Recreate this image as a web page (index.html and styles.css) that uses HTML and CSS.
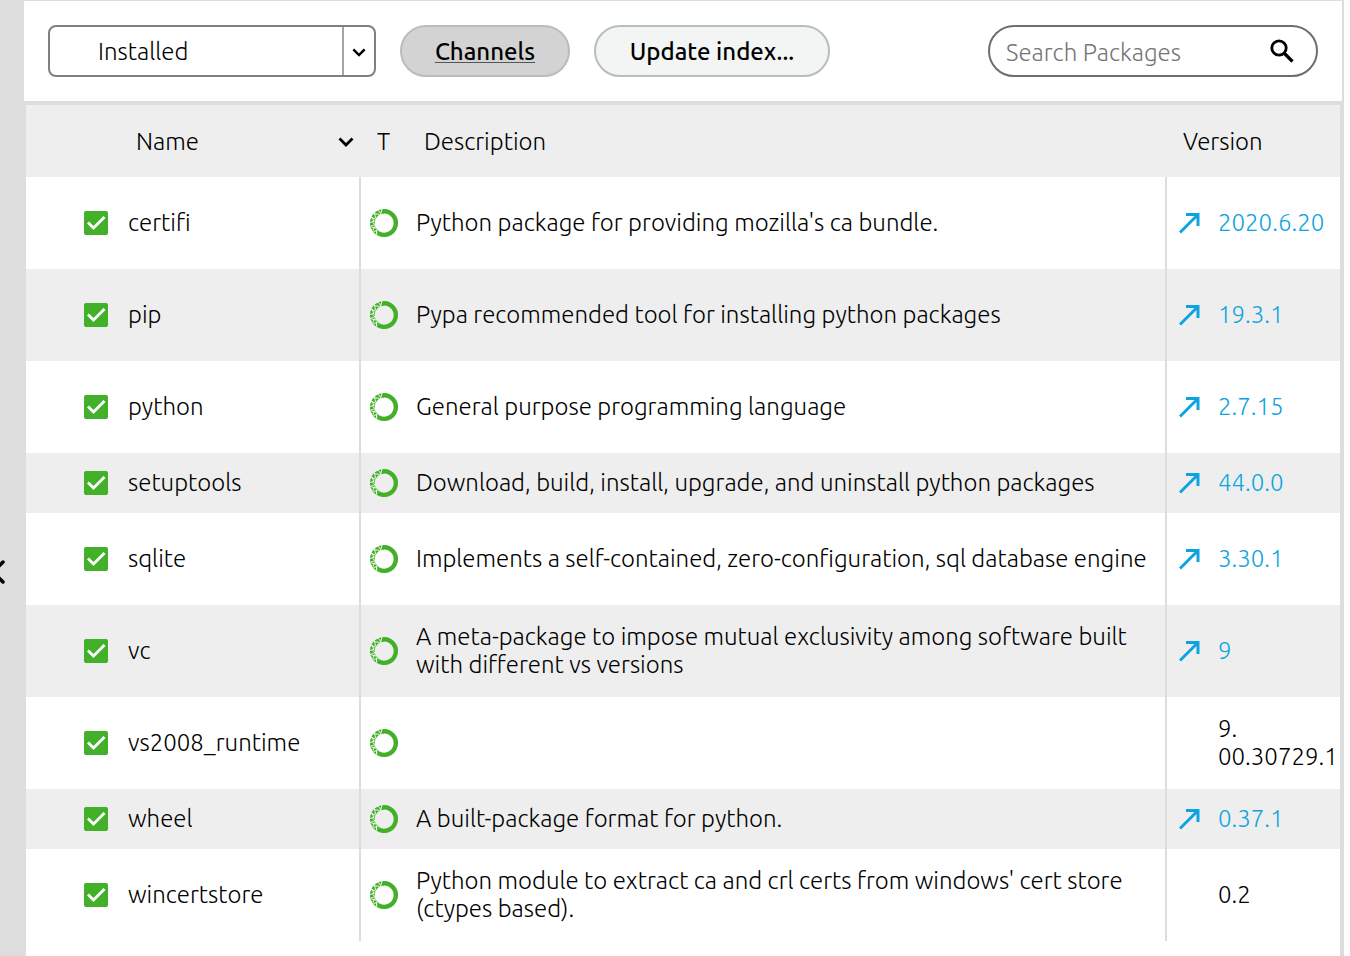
FILE: index.html
```html
<!DOCTYPE html>
<html lang="en">
<head>
    <meta charset="UTF-8">
    <meta name="viewport" content="width=device-width, initial-scale=1.0">
    <title>Packages</title>
    <link rel="stylesheet" href="styles.css">
</head>
<body>
    <svg class="sprite" aria-hidden="true">
        <symbol id="icon-chevron" viewBox="0 0 16 10">
            <path d="M1.5 1.5 8 8 14.5 1.5" fill="none" stroke="#000" stroke-width="2.8"/>
        </symbol>
        <symbol id="icon-ring" viewBox="0 0 28 28">
            <path d="M14 2.2A11.8 11.8 0 1 1 7.6 23.9" fill="none" stroke="#43b02a" stroke-width="4.4"/>
            <path d="M14 2.4A11.6 11.6 0 0 0 7.6 23.7" fill="none" stroke="#43b02a" stroke-width="4.8"/>
            <path d="M12 0l-1.5 5.500M8 1l3 4M4 4.500l5.500 1M4.500 4l1 5M1 8.500l5.500 2M2.500 8l1 4.500M0 13.500l4.500-1.500M2.500 13l2.500 3M0 17.500l4.500-1.500M1.500 18l4.500 1M4.500 17.500l-1.500 4M3.500 22.500l4-1M6.500 20.500v5" stroke="#fff" stroke-width="0.9"/>
        </symbol>
        <symbol id="icon-up" viewBox="0 0 22 22">
            <path d="M1 20.5 18.5 3M7 2.5h12V14" fill="none" stroke="#0ca4e0" stroke-width="3"/>
        </symbol>
    </svg>

    <aside class="sidebar">
        <button class="collapse" aria-label="Collapse sidebar">
            <svg width="5" height="24" viewBox="0 0 5 24"><path d="M3 2-7 12 3 22" fill="none" stroke="#000" stroke-width="3.5" stroke-linecap="round"/></svg>
        </button>
    </aside>

    <main>
        <div class="toolbar">
            <div class="filter">
                <select aria-label="Package filter">
                    <option>Installed</option>
                    <option>Not installed</option>
                    <option>Updatable</option>
                    <option>Selected</option>
                    <option>All</option>
                </select>
                <span class="filter-arrow"><svg width="14" height="9"><use href="#icon-chevron"/></svg></span>
            </div>
            <button class="btn active">Channels</button>
            <button class="btn">Update index...</button>
            <div class="search">
                <input type="text" placeholder="Search Packages" aria-label="Search Packages">
                <svg width="24" height="24" viewBox="0 0 24 24"><path d="M14.5 14.5 22.5 22.5" stroke="#000" stroke-width="3.2"/><circle cx="9" cy="9" r="7.2" fill="none" stroke="#000" stroke-width="2.8"/></svg>
            </div>
        </div>

        <div class="packages">
            <table>
                <colgroup>
                    <col class="col-check">
                    <col class="col-name">
                    <col class="col-type">
                    <col>
                    <col class="col-version">
                </colgroup>
                <thead>
                    <tr>
                        <th></th>
                        <th><span class="sortable">Name <svg width="16" height="10"><use href="#icon-chevron"/></svg></span></th>
                        <th>T</th>
                        <th>Description</th>
                        <th>Version</th>
                    </tr>
                </thead>
                <tbody>
                    <tr class="tall">
                        <td class="check"><input type="checkbox" id="certifi" checked></td>
                        <td class="name"><label for="certifi">certifi</label></td>
                        <td class="type"><svg width="28" height="28"><use href="#icon-ring"/></svg></td>
                        <td class="desc">Python package for providing mozilla's ca bundle.</td>
                        <td class="version"><a href="#"><svg width="22" height="22"><use href="#icon-up"/></svg>2020.6.20</a></td>
                    </tr>
                    <tr class="tall">
                        <td class="check"><input type="checkbox" id="pip" checked></td>
                        <td class="name"><label for="pip">pip</label></td>
                        <td class="type"><svg width="28" height="28"><use href="#icon-ring"/></svg></td>
                        <td class="desc">Pypa recommended tool for installing python packages</td>
                        <td class="version"><a href="#"><svg width="22" height="22"><use href="#icon-up"/></svg>19.3.1</a></td>
                    </tr>
                    <tr class="tall">
                        <td class="check"><input type="checkbox" id="python" checked></td>
                        <td class="name"><label for="python">python</label></td>
                        <td class="type"><svg width="28" height="28"><use href="#icon-ring"/></svg></td>
                        <td class="desc">General purpose programming language</td>
                        <td class="version"><a href="#"><svg width="22" height="22"><use href="#icon-up"/></svg>2.7.15</a></td>
                    </tr>
                    <tr>
                        <td class="check"><input type="checkbox" id="setuptools" checked></td>
                        <td class="name"><label for="setuptools">setuptools</label></td>
                        <td class="type"><svg width="28" height="28"><use href="#icon-ring"/></svg></td>
                        <td class="desc">Download, build, install, upgrade, and uninstall python packages</td>
                        <td class="version"><a href="#"><svg width="22" height="22"><use href="#icon-up"/></svg>44.0.0</a></td>
                    </tr>
                    <tr class="tall">
                        <td class="check"><input type="checkbox" id="sqlite" checked></td>
                        <td class="name"><label for="sqlite">sqlite</label></td>
                        <td class="type"><svg width="28" height="28"><use href="#icon-ring"/></svg></td>
                        <td class="desc">Implements a self-contained, zero-configuration, sql database engine</td>
                        <td class="version"><a href="#"><svg width="22" height="22"><use href="#icon-up"/></svg>3.30.1</a></td>
                    </tr>
                    <tr class="tall">
                        <td class="check"><input type="checkbox" id="vc" checked></td>
                        <td class="name"><label for="vc">vc</label></td>
                        <td class="type"><svg width="28" height="28"><use href="#icon-ring"/></svg></td>
                        <td class="desc">A meta-package to impose mutual exclusivity among software built with different vs versions</td>
                        <td class="version"><a href="#"><svg width="22" height="22"><use href="#icon-up"/></svg>9</a></td>
                    </tr>
                    <tr class="tall">
                        <td class="check"><input type="checkbox" id="vs2008_runtime" checked></td>
                        <td class="name"><label for="vs2008_runtime">vs2008_runtime</label></td>
                        <td class="type"><svg width="28" height="28"><use href="#icon-ring"/></svg></td>
                        <td class="desc"></td>
                        <td class="version"><span>9.<wbr>00.30729.1</span></td>
                    </tr>
                    <tr>
                        <td class="check"><input type="checkbox" id="wheel" checked></td>
                        <td class="name"><label for="wheel">wheel</label></td>
                        <td class="type"><svg width="28" height="28"><use href="#icon-ring"/></svg></td>
                        <td class="desc">A built-package format for python.</td>
                        <td class="version"><a href="#"><svg width="22" height="22"><use href="#icon-up"/></svg>0.37.1</a></td>
                    </tr>
                    <tr class="tall">
                        <td class="check"><input type="checkbox" id="wincertstore" checked></td>
                        <td class="name"><label for="wincertstore">wincertstore</label></td>
                        <td class="type"><svg width="28" height="28"><use href="#icon-ring"/></svg></td>
                        <td class="desc">Python module to extract ca and crl certs from windows' cert store (ctypes based).</td>
                        <td class="version"><span>0.2</span></td>
                    </tr>
                </tbody>
            </table>
        </div>
    </main>
</body>
</html>
```
FILE: styles.css
```css
* {
    box-sizing: border-box;
}
body {
    display: flex;
    min-height: 100vh;
    margin: 0;
    padding-right: 6px;
    font-family: Ubuntu, "Open Sans", sans-serif;
    font-size: 24px;
    font-weight: 300;
    line-height: 28px;
    color: #000;
    background-color: #fff;
}
button, input, select {
    font: inherit;
    color: inherit;
}
svg {
    display: block;
    flex: none;
}
.sprite {
    position: absolute;
    width: 0;
    height: 0;
}
.sidebar {
    flex: none;
    display: flex;
    align-items: center;
    width: 24px;
    padding-top: 188px;
    background-color: #ddd;
}
.collapse {
    padding: 0;
    border: 0;
    background: none;
}
main {
    flex: 1;
    min-width: 0;
    display: flex;
    flex-direction: column;
}

/* Toolbar */
.toolbar {
    display: flex;
    align-items: center;
    gap: 24px;
    height: 101px;
    padding: 0 24px;
    border-top: 1px solid #ddd;
    border-right: 2px solid #ddd;
}
.filter {
    position: relative;
    width: 328px;
    height: 52px;
}
.filter select {
    width: 100%;
    height: 100%;
    padding: 2px 48px 0;
    border: 2px solid #808080;
    border-radius: 8px;
    background-color: #fff;
    appearance: none;
}
.filter-arrow {
    position: absolute;
    top: 2px;
    right: 2px;
    bottom: 2px;
    display: flex;
    align-items: center;
    justify-content: center;
    width: 32px;
    padding-top: 2px;
    border-left: 2px solid #a6a6a6;
    pointer-events: none;
}
.btn {
    height: 52px;
    width: 236px;
    padding: 2px 0 0;
    border: 2px solid #b6bfbd;
    border-radius: 26px;
    font-weight: 500;
    background-color: #f2f5f4;
}
.btn.active {
    width: 170px;
    background-color: #d3d3d3;
    text-decoration: underline 1px #555;
    text-underline-offset: 2px;
}
.search {
    display: flex;
    align-items: center;
    width: 330px;
    height: 52px;
    margin-left: auto;
    padding: 0 22px 0 16px;
    border: 2px solid #6e6e6e;
    border-radius: 26px;
}
.search input {
    flex: 1;
    min-width: 0;
    padding: 4px 0 0;
    border: 0;
    outline: 0;
    background: none;
}
.search input::placeholder {
    color: #757575;
    opacity: 1;
}

/* Package list */
.packages {
    flex: 1;
    border: solid #ddd;
    border-width: 4px 4px 0 2px;
}
table {
    width: 100%;
    table-layout: fixed;
    border-collapse: separate;
    border-spacing: 0;
}
.col-check {
    width: 94px;
}
.col-name {
    width: 241px;
}
.col-type {
    width: 47px;
}
.col-version {
    width: 173px;
}
th {
    height: 72px;
    padding: 2px 0 0 16px;
    text-align: left;
    font-weight: 300;
    background-color: #eee;
}
.sortable {
    display: flex;
    align-items: center;
    justify-content: space-between;
    padding-right: 7px;
}
td {
    height: 60px;
    padding: 0 0 0 8px;
}
.tall td {
    height: 92px;
}
tbody tr:nth-child(even) {
    background-color: #eee;
}
.check {
    padding-left: 58px;
}
.check input {
    display: block;
    width: 24px;
    height: 24px;
    margin: 0;
    border-radius: 2px;
    appearance: none;
    border: 2px solid #43b02a;
}
.check input:checked {
    border: 0;
    background: #43b02a url("data:image/svg+xml,%3Csvg xmlns='http://www.w3.org/2000/svg' viewBox='0 0 24 24'%3E%3Cpath d='M4 11.5l5.5 5.5L20.5 6' fill='none' stroke='%23fff' stroke-width='2.8'/%3E%3C/svg%3E");
}
.name, .desc {
    border-right: 2px solid #ddd;
}
.type {
    padding-left: 9px;
}
.version {
    padding-left: 12px;
}
.version a {
    display: flex;
    align-items: center;
    gap: 17px;
    color: #0ca4e0;
    text-decoration: none;
}
.version span {
    display: block;
    padding-left: 39px;
}
```
